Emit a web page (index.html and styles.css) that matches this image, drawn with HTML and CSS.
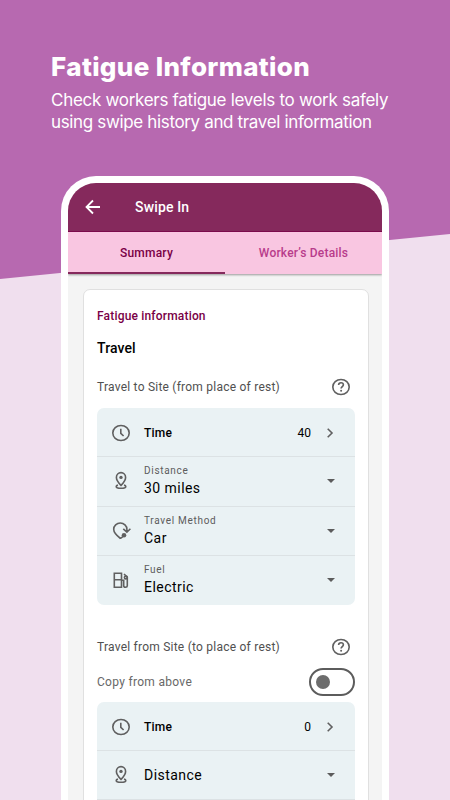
FILE: index.html
```html
<!DOCTYPE html>
<html lang="en">
<head>
  <meta charset="UTF-8" />
  <meta name="viewport" content="width=device-width, initial-scale=1.0" />
  <title>Fatigue Information</title>
  <link rel="stylesheet" href="styles.css">
</head>
<body>
  <!-- shared icons -->
  <svg class="icon-defs" width="0" height="0">
    <symbol id="clock" viewBox="0 0 20 20">
      <ellipse cx="10" cy="10" rx="8.2" ry="7.5" />
      <path d="M9.8 5.8v4.5l2.8 2.7" />
    </symbol>
    <symbol id="pin" viewBox="0 0 20 20">
      <path d="M10 14.4C7 11.4 5.4 9.2 5.4 6.5a4.6 4.9 0 0 1 9.2 0c0 2.7-1.6 4.9-4.6 7.9z" />
      <circle class="solid" cx="10" cy="6.4" r="1.7" />
      <path d="M7 14.1c-1.2.3-1.8.8-1.8 1.4 0 1.1 2.1 1.8 4.8 1.8s4.8-.7 4.8-1.8c0-.6-.6-1.1-1.8-1.4" />
    </symbol>
    <symbol id="help" viewBox="0 0 20 20">
      <ellipse cx="10" cy="10" rx="8.2" ry="7.5" />
      <path d="M7.6 8c0-1.4 1-2.3 2.4-2.3s2.4.9 2.4 2.1c0 1.7-2.3 1.9-2.3 3.8" />
      <circle class="solid" cx="10.1" cy="13.8" r="1" />
    </symbol>
    <symbol id="chevron" viewBox="0 0 10 10">
      <path d="M2.7 0.8 7 5 2.7 9.2" />
    </symbol>
  </svg>

  <header class="intro">
    <h1>Fatigue Information</h1>
    <p>Check workers fatigue levels to work safely</p>
    <p class="last">using swipe history and travel information</p>
  </header>

  <div class="phone">
    <div class="screen">
      <div class="app-bar">
        <svg class="back" viewBox="0 0 16 16"><path d="M15 8H1.8M8 1.5 1.5 8 8 14.5" /></svg>
        <span class="app-title">Swipe In</span>
      </div>
      <div class="tabs">
        <div class="tab active">Summary</div>
        <div class="tab">Worker’s Details</div>
      </div>

      <div class="card">
        <h2>Fatigue information</h2>
        <h3>Travel</h3>
        <div class="section-head">
          <span>Travel to Site (from place of rest)</span>
          <svg class="help"><use href="#help" /></svg>
        </div>
        <div class="list">
          <div class="row time">
            <svg class="icon"><use href="#clock" /></svg>
            <span class="name">Time</span>
            <span class="value">40</span>
            <svg class="chevron"><use href="#chevron" /></svg>
          </div>
          <div class="row tall">
            <svg class="icon"><use href="#pin" /></svg>
            <div class="field">
              <span class="label">Distance</span>
              <span class="choice">30 miles</span>
            </div>
            <span class="caret"></span>
          </div>
          <div class="row tall">
            <svg class="icon" viewBox="0 0 20 20">
              <path d="M9.5 17.5C5 14 2.7 11 2.7 8.2a6.6 6.2 0 0 1 13.2 0v2.4M12.3 7.8l3.6 3.4 3.5-3.4M9.5 17.5l2.3-1.9" />
              <circle class="solid" cx="13" cy="14.3" r="2.3" />
            </svg>
            <div class="field">
              <span class="label">Travel Method</span>
              <span class="choice">Car</span>
            </div>
            <span class="caret"></span>
          </div>
          <div class="row tall">
            <svg class="icon" viewBox="0 0 20 20">
              <path d="M3.3 3.2h7.2v14H3.3zM3.300 9.700h7.200M10.500 10.200h2.200v5.500a1.800 1.500 0 0 0 3.600 0V7L13 4" />
              <circle cx="14.8" cy="7.5" r="1.4" />
            </svg>
            <div class="field">
              <span class="label">Fuel</span>
              <span class="choice">Electric</span>
            </div>
            <span class="caret"></span>
          </div>
        </div>

        <div class="section-head second">
          <span>Travel from Site (to place of rest)</span>
          <svg class="help"><use href="#help" /></svg>
        </div>
        <div class="copy">
          <span>Copy from above</span>
          <div class="toggle"><div class="knob"></div></div>
        </div>
        <div class="list">
          <div class="row time">
            <svg class="icon"><use href="#clock" /></svg>
            <span class="name">Time</span>
            <span class="value">0</span>
            <svg class="chevron"><use href="#chevron" /></svg>
          </div>
          <div class="row">
            <svg class="icon"><use href="#pin" /></svg>
            <span class="choice empty">Distance</span>
            <span class="caret"></span>
          </div>
          <div class="row"></div>
        </div>
      </div>
    </div>
  </div>
</body>
</html>
```
FILE: styles.css
```css
* {
  box-sizing: border-box;
}
body {
  margin: 0;
  height: 800px;
  overflow: hidden;
  font-family: Roboto, sans-serif;
  background: #f0dfee;
  position: relative;
  z-index: 0;
}
/* slanted purple backdrop */
body::before {
  content: "";
  position: absolute;
  inset: 0;
  z-index: -1;
  background: #b769b0;
  clip-path: polygon(0 0, 100% 0, 100% 234px, 0 279px);
}
h1, h2, h3, p {
  margin: 0;
}
svg {
  fill: none;
  stroke: #606060;
  stroke-width: 1.6;
  flex: none;
}
.solid {
  fill: #606060;
  stroke: none;
}
.icon-defs {
  position: absolute;
}
.intro {
  height: 176px;
  padding: 52px 0 0 51px;
  color: #fff;
  font-family: Inter, sans-serif;
  white-space: nowrap;
}
.intro h1 {
  font-size: 26px;
  line-height: 30px;
  font-weight: 800;
  letter-spacing: 0.35px;
  margin-bottom: 7px;
}
.intro p {
  font-size: 17px;
  line-height: 22px;
  letter-spacing: -0.29px;
}
.intro .last {
  letter-spacing: -0.35px;
}
.phone {
  width: 328px;
  height: 640px;
  margin-left: 61px;
  padding: 7px 7px 0;
  background: #fff;
  border-radius: 35px 35px 0 0;
}
.screen {
  height: 100%;
  background: #f4f4f4;
  border-radius: 28px 28px 0 0;
  overflow: hidden;
}
.app-bar {
  height: 49px;
  display: flex;
  align-items: center;
  padding-left: 17px;
  background: #85295c;
  border-bottom: 1px solid #790046;
}
.back {
  width: 16px;
  height: 16px;
  stroke: #fff;
  stroke-width: 1.8;
}
.app-title {
  margin-left: 34px;
  color: #fff;
  font-size: 14px;
  font-weight: 500;
  letter-spacing: 0.15px;
}
.tabs {
  height: 42px;
  display: flex;
  background: #f9c6e1;
  box-shadow: 0 1px 2px #999;
}
.tab {
  flex: 1;
  text-align: center;
  color: #b83c8b;
  font-size: 12px;
  font-weight: 500;
  letter-spacing: 0.2px;
  line-height: 42px;
}
.tab.active {
  color: #790046;
  border-bottom: 2px solid #85295c;
}
.card {
  width: 286px;
  height: 540px;
  margin: 15px 0 0 15px;
  padding: 18px 13px 0;
  background: #fff;
  border: 1px solid #e0e0e0;
  border-radius: 7px;
  white-space: nowrap;
}
h2 {
  font-size: 12px;
  line-height: 16px;
  font-weight: 500;
  letter-spacing: 0.18px;
  color: #790046;
}
h3 {
  font-size: 14px;
  line-height: 18px;
  font-weight: 500;
  letter-spacing: 0.1px;
  margin-top: 15px;
}
.section-head {
  height: 20px;
  display: flex;
  align-items: center;
  justify-content: space-between;
  margin: 20px 4px 11px 0;
  font-size: 12px;
  letter-spacing: 0.23px;
  color: #505050;
}
.help, .icon {
  width: 20px;
  height: 20px;
}
.list {
  background: #eaf2f4;
  border-radius: 7px;
  overflow: hidden;
}
.row {
  height: 49px;
  display: flex;
  align-items: center;
  padding: 0 20px 0 14px;
}
.row.time {
  height: 48px;
  padding-top: 1px;
}
.row.tall {
  height: 49.5px;
}
.row + .row {
  border-top: 1px solid #dce2e4;
}
.name {
  margin-left: 13px;
  font-size: 12px;
  font-weight: 500;
  letter-spacing: 0.2px;
}
.value {
  margin-left: auto;
  font-size: 12px;
}
.chevron {
  width: 10px;
  height: 10px;
  margin-left: 14px;
}
.field {
  margin-left: 13px;
  display: flex;
  flex-direction: column;
}
.label {
  font-size: 10px;
  line-height: 14px;
  letter-spacing: 0.7px;
  color: #5c5c5c;
}
.choice {
  font-size: 14px;
  line-height: 20px;
  letter-spacing: 0.45px;
}
.empty {
  margin-left: 13px;
}
.caret {
  margin-left: auto;
  border: 4.5px solid transparent;
  border-top-color: #5c5c5c;
  border-bottom: 0;
}
.section-head.second {
  margin-top: 32.5px;
}
.copy {
  height: 28px;
  display: flex;
  align-items: center;
  justify-content: space-between;
  margin-bottom: 6px;
  font-size: 12px;
  letter-spacing: 0.3px;
  color: #686868;
}
.toggle {
  width: 46px;
  height: 28px;
  padding: 5px;
  border: 2px solid #5c5c5c;
  border-radius: 14px;
}
.knob {
  width: 14px;
  height: 14px;
  border-radius: 50%;
  background: #6c6c6c;
}
```
